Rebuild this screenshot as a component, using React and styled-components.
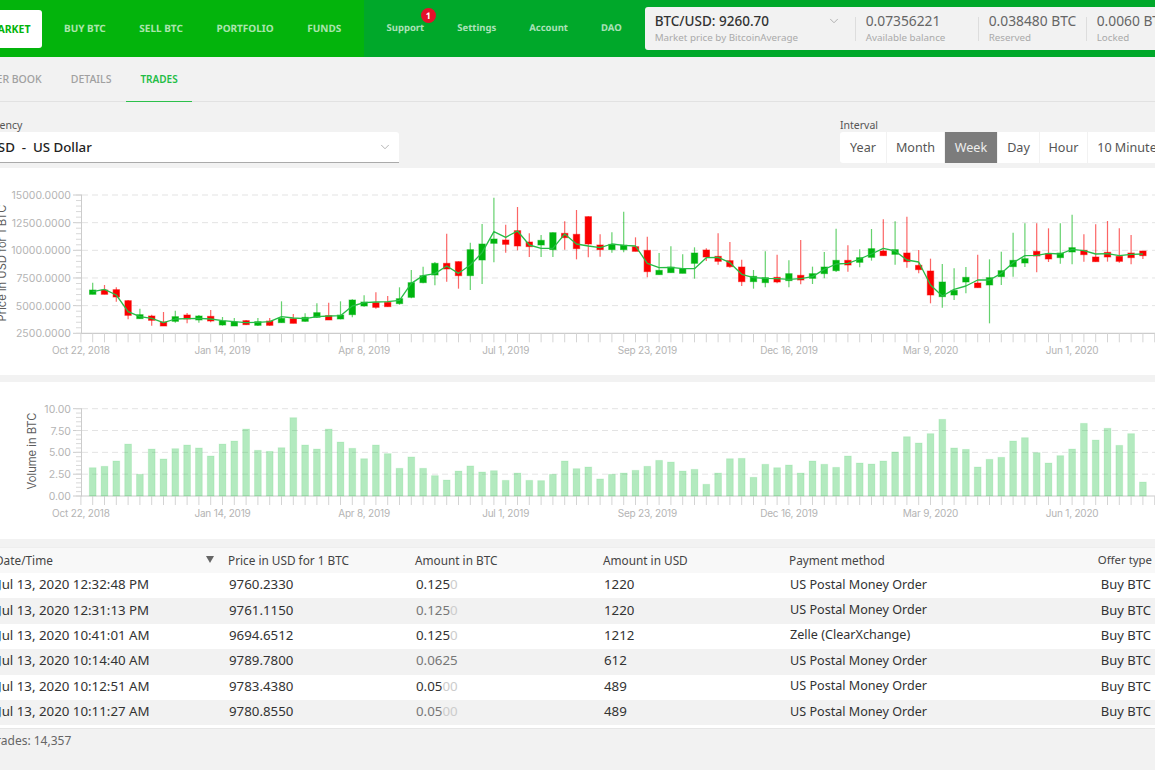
import React from "react";
import styled, { createGlobalStyle } from "styled-components";
import { ChevronDown } from "lucide-react";

const GlobalStyle = createGlobalStyle`
  html, body {
    margin: 0;
    height: 770px;
    overflow: hidden;
    background: #f2f2f2;
  }
  body {
    font-family: "Noto Sans", "Liberation Sans", sans-serif;
    color: #333;
  }
`;

const Page = styled.div`
  width: 1230px;
  margin-left: -30px;
`;

const TopBar = styled.header`
  display: flex;
  height: 57px;
`;

const MainNav = styled.nav`
  display: flex;
  align-items: center;
  width: 394px;
  flex: none;
  background: #03b40c;
`;

const ActiveTab = styled.a`
  display: flex;
  align-items: center;
  justify-content: flex-end;
  width: 72px;
  height: 38px;
  margin-right: 5.2px;
  padding-right: 11.5px;
  box-sizing: border-box;
  background: #fff;
  border-radius: 3px;
  color: #03b40c;
  font-size: 10.5px;
  font-weight: 700;
`;

const NavLink = styled.a`
  position: relative;
  margin-top: -2px;
  padding: 0 16.8px;
  color: rgba(255, 255, 255, 0.68);
  font-size: 10px;
  font-weight: 700;
  text-rendering: geometricPrecision;
  white-space: nowrap;
`;

const SideLink = styled(NavLink)`
  padding: 0 16.5px;
  font-size: 9.5px;
`;

const SideNav = styled.nav`
  display: flex;
  flex: 1;
  align-items: center;
  padding-left: 6px;
  background: #00a82a;
`;

const Badge = styled.span`
  position: absolute;
  top: -13px;
  right: 5px;
  width: 15px;
  height: 15px;
  border-radius: 50%;
  background: #e5102a;
  color: #fff;
  font-size: 9px;
  line-height: 15px;
  text-align: center;
`;

const MarketBox = styled.div`
  display: flex;
  align-items: center;
  height: 43px;
  margin-left: 6.5px;
  padding-left: 10px;
  flex: 1;
  background: #f2f2f2;
  border-radius: 3px;
  white-space: nowrap;
`;

const Stat = styled.div`
  display: flex;
  flex-direction: column;
  gap: 1px;
  width: ${(p) => p.$width}px;
  flex: none;
  & + & {
    box-sizing: border-box;
    padding-left: 11px;
    background: linear-gradient(#ddd, #ddd) left center / 1px 24px no-repeat;
  }
`;

const StatValue = styled.div`
  display: flex;
  align-items: center;
  justify-content: space-between;
  padding-right: ${(p) => (p.$main ? "14px" : "0")};
  color: ${(p) => (p.$main ? "#333" : "#666")};
  font-size: ${(p) => (p.$main ? "13.5px" : "13.8px")};
  font-weight: ${(p) => (p.$main ? 500 : 400)};
  line-height: 18px;
`;

const StatLabel = styled.div`
  color: #aaa;
  font-size: 9.8px;
  line-height: 14px;
`;

const SubTabs = styled.div`
  display: flex;
  height: 44px;
  border-bottom: 1px solid #e2e2e2;
`;

const SubTab = styled.a`
  display: flex;
  align-items: center;
  padding: 0 14.5px;
  margin-bottom: -1px;
  border-bottom: 1px solid ${(p) => (p.$active ? "#2cc04b" : "transparent")};
  color: ${(p) => (p.$active ? "#22bd45" : "#a0a0a0")};
  font-size: ${(p) => (p.$active ? "10px" : "10.5px")};
  font-weight: ${(p) => (p.$active ? 600 : 500)};
  &:first-child {
    margin-left: -10.5px;
  }
`;

const Filters = styled.div`
  display: flex;
  justify-content: space-between;
  height: 66px;
  padding: 16px 0 0 8px;
  box-sizing: border-box;
`;

const Field = styled.div`
  width: ${(p) => p.$width}px;
  flex: none;
`;

const FieldLabel = styled.div`
  height: 14px;
  color: #555;
  font-size: 10.5px;
  line-height: 14px;
`;

const SelectBox = styled.div`
  display: flex;
  align-items: center;
  justify-content: space-between;
  height: 31px;
  padding: 0 7px 0 10px;
  box-sizing: border-box;
  background: #fff;
  border-bottom: 1px solid #aaa;
  border-radius: 3px 3px 0 0;
  color: #222;
  font-size: 13.3px;
  font-weight: 500;
  white-space: pre;
`;

const Segments = styled.div`
  display: flex;
  gap: 1px;
  height: 31px;
`;

const Segment = styled.div`
  display: flex;
  align-items: center;
  justify-content: center;
  width: ${(p) => p.$width}px;
  background: ${(p) => (p.$active ? "#7c7c7c" : "#fff")};
  color: ${(p) => (p.$active ? "#eee" : "#555")};
  font-size: 12.6px;
  white-space: nowrap;
  &:first-child {
    border-radius: 3px 0 0 3px;
  }
`;

const ChartPanel = styled.section`
  height: ${(p) => p.$height}px;
  margin-bottom: ${(p) => p.$gap}px;
  background: #fff;
`;

const ChartSvg = styled.svg`
  display: block;
  font-family: Inter, "Liberation Sans", sans-serif;
  font-size: 10.5px;
  fill: #b4b4b4;
`;

const DateLabel = styled.text`
  font-size: 10px;
  letter-spacing: -0.2px;
`;

const AxisTitle = styled.text`
  fill: #5c5c5c;
  font-size: 11.2px;
`;

const Table = styled.div`
  border-bottom: 1px solid #e6e6e6;
`;

const columns = "231px 187px 188px 186px 1fr";

const HeaderRow = styled.div`
  display: grid;
  grid-template-columns: ${columns};
  align-items: center;
  height: 26px;
  padding: 0 48px 2px 27px;
  background: #f8f8f8;
  border-top: 1px solid #eee;
  box-sizing: border-box;
  color: #444;
  font-size: 11.8px;
`;

const HeaderCell = styled.div`
  display: flex;
  justify-content: space-between;
  align-items: center;
  ${(p) => p.$sort && "margin-left: -2px; padding-right: 14px;"}
`;

const OfferHeader = styled.span`
  font-size: 11.4px;
`;

const SortArrow = styled.span`
  width: 0;
  height: 0;
  border-left: 4.5px solid transparent;
  border-right: 4.5px solid transparent;
  border-top: 7px solid #666;
`;

const Body = styled.div`
  padding-bottom: 3px;
  background: #fff;
`;

const Row = styled.div`
  display: grid;
  grid-template-columns: ${columns};
  align-items: center;
  height: 25.4px;
  padding: 0 48px 3px 27px;
  box-sizing: border-box;
  background: ${(p) => (p.$odd ? "#f2f2f2" : "#fff")};
  color: #333;
  font-size: 13.3px;
`;

const Cell = styled.div`
  padding-left: 1px;
  white-space: nowrap;
  color: ${(p) => (p.$muted ? "#777" : "inherit")};
`;

const MethodCell = styled.div`
  display: flex;
  justify-content: space-between;
  align-items: center;
  padding-left: 1px;
  font-size: 12.6px;
  white-space: nowrap;
`;

const OfferType = styled.span`
  margin-right: 1px;
  font-size: 13px;
`;

const FaintZeros = styled.span`
  color: #ccc;
`;

const Footer = styled.div`
  padding: 3px 0 0 20px;
  color: #666;
  font-size: 12px;
`;

// candle values are chart pixels x3, read off the plot: high, top, bottom, low, line, up
const candles = [
  [308,330,343,343,335,1],[315,330,343,343,328,0],[322,329,351,365,345,0],[360,362,406,418,395,0],[386,404,416,416,410,1],
  [404,408,421,437,415,0],[396,426,438,438,428,0],[392,410,424,428,417,1],[399,405,417,430,416,0],[405,408,420,428,415,1],
  [390,409,423,427,417,0],[411,423,435,437,422,1],[414,426,438,438,425,1],[420,422,434,435,428,0],[414,425,436,438,427,1],
  [414,423,436,437,425,0],[364,415,428,428,410,1],[402,416,430,430,414,0],[400,412,424,425,416,1],[370,398,412,414,410,1],
  [368,407,420,420,408,0],[364,405,417,418,407,1],[358,360,404,412,378,1],[346,366,378,380,368,1],[337,368,382,386,366,0],
  [348,367,380,380,365,0],[322,356,371,374,361,1],[270,308,352,355,310,1],[260,287,308,310,287,1],[246,250,285,316,281,1],
  [161,250,267,305,258,0],[244,245,287,326,280,0],[188,209,287,330,255,1],[132,192,240,312,218,1],[53,177,190,247,155,1],
  [134,180,193,218,172,0],[81,152,198,211,153,0],[160,186,200,231,195,0],[165,181,195,231,205,1],[157,158,209,231,205,1],
  [124,160,173,209,162,0],[90,163,206,238,192,0],[109,110,192,232,198,0],[163,195,209,230,203,0],[157,193,209,218,192,1],
  [95,195,209,217,196,1],[172,200,214,214,198,0],[170,211,275,292,250,0],[219,271,284,284,263,1],[199,261,278,278,262,1],
  [223,267,280,280,266,1],[202,219,250,296,266,1],[205,210,231,243,233,0],[160,229,244,254,232,0],[186,242,260,263,248,0],
  [239,261,305,318,283,0],[270,289,305,326,293,1],[214,293,308,322,295,1],[224,292,306,310,296,0],[241,281,302,322,298,1],
  [180,286,300,313,296,0],[260,281,295,312,290,1],[216,261,281,295,268,1],[146,241,272,276,252,1],[196,241,255,275,250,0],
  [208,233,247,262,237,1],[147,206,232,242,222,1],[118,213,227,227,205,0],[124,209,223,254,213,1],[110,219,245,263,240,0],
  [210,256,269,280,246,0],[236,273,345,370,315,0],[252,306,350,383,348,1],[265,331,345,360,328,1],[261,292,306,340,318,1],
  [224,309,323,323,300,0],[238,293,315,430,300,1],[215,272,290,315,280,1],[158,241,260,290,248,1],[130,236,249,261,227,1],
  [130,214,228,277,226,0],[145,221,237,246,220,0],[130,219,233,251,222,1],[104,203,216,253,208,1],[163,211,224,245,212,0],
  [133,231,245,245,222,0],[123,217,231,245,221,0],[145,229,244,248,227,0],[165,219,233,253,223,0],[213,213,227,237,222,0],
];

const volumes = [
  3.24,3.4,4.01,5.95,2.48,5.38,4.24,5.42,5.84,5.5,4.58,5.95,6.3,7.67,5.23,5.11,5.53,8.97,5.84,5.38,
  7.67,6.18,5.46,4.27,5.84,4.85,3.17,4.47,3.17,2.33,1.83,2.86,3.44,2.75,2.9,1.79,2.63,1.79,1.76,2.48,
  4.01,3.13,3.32,1.95,2.48,2.63,2.94,3.4,4.08,3.89,2.86,3.05,1.34,2.63,4.27,4.31,2.14,3.63,3.24,3.55,
  2.63,4.01,3.63,3.28,4.58,3.78,3.66,4.01,5.04,6.79,6.07,7.14,8.78,5.5,5.34,3.32,4.2,4.43,6.3,6.68,
  4.96,3.78,4.62,5.38,8.32,6.41,7.75,5.8,7.14,1.6,
];

const dateTicks = [
  [-1, "Oct 22, 2018"],[11, "Jan 14, 2019"],[23, "Apr 8, 2019"],[35, "Jul 1, 2019"],
  [47, "Sep 23, 2019"],[59, "Dec 16, 2019"],[71, "Mar 9, 2020"],[83, "Jun 1, 2020"],
];

const trades = [
  ["Jul 13, 2020 12:32:48 PM","9760.2330","0.125","0","1220","US Postal Money Order"],
  ["Jul 13, 2020 12:31:13 PM","9761.1150","0.125","0","1220","US Postal Money Order"],
  ["Jul 13, 2020 10:41:01 AM","9694.6512","0.125","0","1212","Zelle (ClearXchange)"],
  ["Jul 13, 2020 10:14:40 AM","9789.7800","0.0625","","612","US Postal Money Order"],
  ["Jul 13, 2020 10:12:51 AM","9783.4380","0.05","00","489","US Postal Money Order"],
  ["Jul 13, 2020 10:11:27 AM","9780.8550","0.05","00","489","US Postal Money Order"],
];

const xAt = (i) => 92.7 + 11.8 * i;
const GREEN = "#00b50f";
const RED = "#fb0000";

// shared axes: dashed grid, y ticks with minors, one x tick per week
function Axes({ top, bottom, labels }) {
  const step = (bottom - top) / (labels.length - 1);
  const minors = [];
  for (let i = 0; i < (labels.length - 1) * 5 + 1; i++) minors.push(top + (i * step) / 5);
  const weeks = [];
  for (let i = -1; i <= 91; i++) weeks.push(xAt(i));
  return (
    <g>
      {labels.map((label, i) => (
        <g key={label}>
          {i < labels.length - 1 && (
            <line x1={82} x2={1200} y1={top + i * step} y2={top + i * step} stroke="#e3e3e3" strokeDasharray="6 4" />
          )}
          <text x={71} y={top + i * step + 4} textAnchor="end">{label}</text>
          <line x1={73} x2={82} y1={top + i * step} y2={top + i * step} stroke="#ccc" />
        </g>
      ))}
      {minors.map((y) => <line key={y} x1={76} x2={82} y1={y} y2={y} stroke="#d8d8d8" />)}
      <line x1={81.5} x2={81.5} y1={top} y2={bottom} stroke="#ccc" />
      <line x1={81} x2={1200} y1={bottom} y2={bottom} stroke="#ccc" strokeWidth={1.2} />
      {weeks.map((x) => <line key={x} x1={x} x2={x} y1={bottom} y2={bottom + 9} stroke="#d4d4d4" />)}
      {dateTicks.map(([i, label]) => (
        <DateLabel key={label} x={xAt(i)} y={bottom + 21} textAnchor="middle">{label}</DateLabel>
      ))}
    </g>
  );
}

function PriceChart() {
  const y = (v) => 180 + v / 3;
  const linePoints = candles.map((c, i) => `${xAt(i)},${y(c[4])}`).join(" ");
  return (
    <ChartSvg width="1230" height="207" viewBox="-30 168 1230 207">
      <AxisTitle transform="translate(6 263) rotate(-90)" textAnchor="middle">Price in USD for 1 BTC</AxisTitle>
      <Axes top={195} bottom={333.3} labels={["15000.0000","12500.0000","10000.0000","7500.0000","5000.0000","2500.0000"]} />
      {candles.map(([high, bodyTop, bodyBottom, low, , up], i) => (
        <g key={i} fill={up ? GREEN : RED} stroke={up ? GREEN : RED}>
          <line x1={xAt(i)} x2={xAt(i)} y1={y(high)} y2={y(low)} strokeWidth={1.2} opacity={0.6} />
          <rect x={xAt(i) - 3.2} y={y(bodyTop)} width={6.4} height={(bodyBottom - bodyTop) / 3} strokeOpacity={0.5} />
        </g>
      ))}
      <polyline points={linePoints} fill="none" stroke="#27bd45" strokeWidth={1.3} strokeLinejoin="round" />
    </ChartSvg>
  );
}

function VolumeChart() {
  const y = (v) => 496 - v * 8.73;
  return (
    <ChartSvg width="1230" height="157" viewBox="-30 382 1230 157">
      <AxisTitle transform="translate(36 451) rotate(-90)" textAnchor="middle">Volume in BTC</AxisTitle>
      <Axes top={408.7} bottom={496} labels={["10.00","7.50","5.00","2.50","0.00"]} />
      {volumes.map((v, i) => (
        <rect key={i} x={xAt(i) - 3.4} y={y(v)} width={6.8} height={v * 8.73} fill="#2dc64e" fillOpacity={0.36} stroke="#2dc64e" strokeOpacity={0.12} />
      ))}
    </ChartSvg>
  );
}

export default function App() {
  return (
    <Page>
      <GlobalStyle />
      <TopBar>
        <MainNav>
          <ActiveTab>MARKET</ActiveTab>
          <NavLink>BUY BTC</NavLink>
          <NavLink>SELL BTC</NavLink>
          <NavLink>PORTFOLIO</NavLink>
          <NavLink>FUNDS</NavLink>
        </MainNav>
        <SideNav>
          <SideLink>Support<Badge>1</Badge></SideLink>
          <SideLink>Settings</SideLink>
          <SideLink>Account</SideLink>
          <SideLink>DAO</SideLink>
          <MarketBox>
            <Stat $width={200}>
              <StatValue $main>BTC/USD: 9260.70<ChevronDown size={14} strokeWidth={1.25} color="#999" /></StatValue>
              <StatLabel>Market price by BitcoinAverage</StatLabel>
            </Stat>
            <Stat $width={123}>
              <StatValue>0.07356221</StatValue>
              <StatLabel>Available balance</StatLabel>
            </Stat>
            <Stat $width={108}>
              <StatValue>0.038480 BTC</StatValue>
              <StatLabel>Reserved</StatLabel>
            </Stat>
            <Stat $width={100}>
              <StatValue>0.0060 BTC</StatValue>
              <StatLabel>Locked</StatLabel>
            </Stat>
          </MarketBox>
        </SideNav>
      </TopBar>

      <SubTabs>
        <SubTab>ORDER BOOK</SubTab>
        <SubTab>DETAILS</SubTab>
        <SubTab $active>TRADES</SubTab>
      </SubTabs>

      <Filters>
        <Field $width={421}>
          <FieldLabel>Currency</FieldLabel>
          <SelectBox>
            USD  -  US Dollar
            <ChevronDown size={14} strokeWidth={1.25} color="#999" />
          </SelectBox>
        </Field>
        <Field $width={360}>
          <FieldLabel>Interval</FieldLabel>
          <Segments>
            <Segment $width={46}>Year</Segment>
            <Segment $width={57}>Month</Segment>
            <Segment $width={52} $active>Week</Segment>
            <Segment $width={41}>Day</Segment>
            <Segment $width={47}>Hour</Segment>
            <Segment $width={84}>10 Minutes</Segment>
          </Segments>
        </Field>
      </Filters>

      <ChartPanel $height={207} $gap={7}><PriceChart /></ChartPanel>
      <ChartPanel $height={157} $gap={8}><VolumeChart /></ChartPanel>

      <Table>
        <HeaderRow>
          <HeaderCell $sort>Date/Time<SortArrow /></HeaderCell>
          <HeaderCell>Price in USD for 1 BTC</HeaderCell>
          <HeaderCell>Amount in BTC</HeaderCell>
          <HeaderCell>Amount in USD</HeaderCell>
          <HeaderCell>
            Payment method
            <OfferHeader>Offer type</OfferHeader>
          </HeaderCell>
        </HeaderRow>
        <Body>
          {trades.map((t, i) => (
            <Row key={t[0]} $odd={i % 2 === 1}>
              <Cell>{t[0]}</Cell>
              <Cell>{t[1]}</Cell>
              <Cell $muted={i % 2 === 1}>{t[2]}<FaintZeros>{t[3]}</FaintZeros></Cell>
              <Cell>{t[4]}</Cell>
              <MethodCell>
                {t[5]}
                <OfferType>Buy BTC</OfferType>
              </MethodCell>
            </Row>
          ))}
        </Body>
      </Table>
      <Footer>Trades: 14,357</Footer>
    </Page>
  );
}
